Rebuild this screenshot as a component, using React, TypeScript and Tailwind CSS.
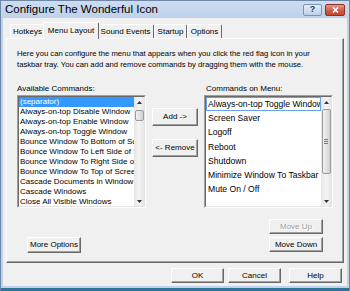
import React from 'react';

const leftItems = [
  '(separator)',
  'Always-on-top Disable Window',
  'Always-on-top Enable Window',
  'Always-on-top Toggle Window',
  'Bounce Window To Bottom of Screen',
  'Bounce Window To Left Side of Screen',
  'Bounce Window To Right Side of Screen',
  'Bounce Window To Top of Screen',
  'Cascade Documents in Window',
  'Cascade Windows',
  'Close All Visible Windows',
];

const rightItems = [
  'Always-on-top Toggle Window',
  'Screen Saver',
  'Logoff',
  'Reboot',
  'Shutdown',
  'Minimize Window To Taskbar',
  'Mute On / Off',
];

const Btn: React.FC<{ label: string; className?: string; disabled?: boolean }> = ({ label, className = '', disabled }) => (
  <div
    className={`flex items-center justify-center bg-[#f0f0f0] border border-t-white border-l-white border-r-[#696969] border-b-[#696969] shadow-[inset_-1px_-1px_0_#a0a0a0] text-[8px] leading-none ${
      disabled ? 'text-[#a0a0a0] [text-shadow:1px_1px_0_#fff]' : 'text-black'
    } ${className}`}
  >
    {label}
  </div>
);

const ScrollBar: React.FC<{ thumbTop: number; thumbH: number; grip?: boolean }> = ({ thumbTop, thumbH, grip }) => (
  <div className="w-[10px] h-full flex flex-col bg-gradient-to-r from-[#e6e6e6] via-[#f4f4f4] to-[#e6e6e6] shrink-0">
    <div className="h-[10px] flex items-center justify-center shrink-0">
      <svg width="5" height="3" viewBox="0 0 5 3"><path d="M0 3 L2.5 0 L5 3 Z" fill="#333" /></svg>
    </div>
    <div className="flex-1 flex flex-col">
      <div style={{ height: thumbTop }} />
      <div
        style={{ height: thumbH }}
        className="mx-[0.5px] rounded-[2px] border border-[#9b9b9b] bg-gradient-to-r from-[#f2f2f2] via-[#e2e2e2] to-[#cfcfcf] flex flex-col items-center justify-center gap-[1px]"
      >
        {grip && (
          <>
            <div className="w-[4px] h-px bg-[#7a7a7a]" />
            <div className="w-[4px] h-px bg-[#7a7a7a]" />
            <div className="w-[4px] h-px bg-[#7a7a7a]" />
          </>
        )}
      </div>
    </div>
    <div className="h-[10px] flex items-center justify-center shrink-0">
      <svg width="5" height="3" viewBox="0 0 5 3"><path d="M0 0 L2.5 3 L5 0 Z" fill="#333" /></svg>
    </div>
  </div>
);

const Sunken: React.FC<{ children: React.ReactNode; className?: string }> = ({ children, className = '' }) => (
  <div className={`border border-t-[#a0a0a0] border-l-[#a0a0a0] border-r-white border-b-white ${className}`}>
    <div className="w-full h-full border border-t-[#696969] border-l-[#696969] border-r-[#e3e3e3] border-b-[#e3e3e3] bg-white flex overflow-hidden">
      {children}
    </div>
  </div>
);

const Tab: React.FC<{ label: string; w: string; active?: boolean }> = ({ label, w, active }) => (
  <div
    className={`${w} flex items-center justify-center text-[8px] text-black bg-[#f0f0f0] border border-b-0 border-t-white border-l-white border-r-[#696969] rounded-t-[2px] ${
      active ? 'h-[17px] -mb-px relative z-10 -mx-[2px]' : 'h-[14px]'
    }`}
  >
    <span className={active ? '-mt-[1px]' : ''}>{label}</span>
  </div>
);

export default function App() {
  return (
    <div className="w-[350px] h-[291px] flex flex-col bg-[#bfd2ea] border border-b-0 border-[#6f86a6] font-['Liberation_Sans',Arial,sans-serif] overflow-hidden select-none">
      {/* title bar */}
      <div className="h-[17px] shrink-0 flex items-center justify-between pl-[4px] pr-[4px] bg-gradient-to-b from-[#cddcf0] to-[#bfd2ea]">
        <span className="text-[11.5px] text-black leading-none">Configure The Wonderful Icon</span>
        <div className="flex items-center gap-[3px]">
          <div className="w-[19px] h-[12px] rounded-[2px] border border-[#7d93b3] bg-gradient-to-b from-[#e3edf9] to-[#bdd0e9] flex items-center justify-center text-[9px] leading-none text-[#2c3e5a] font-bold">
            ?
          </div>
          <div className="w-[20px] h-[12px] rounded-[2px] border border-[#8a3225] bg-gradient-to-b from-[#e49a8a] via-[#d0604c] to-[#c2442e] flex items-center justify-center">
            <svg width="7" height="6" viewBox="0 0 7 6">
              <path d="M1 0.5 L6 5.5 M6 0.5 L1 5.5" stroke="#fff" strokeWidth="1.6" />
            </svg>
          </div>
        </div>
      </div>

      {/* client area */}
      <div className="mx-[2px] flex-1 bg-[#f0f0f0] flex flex-col pt-[3px] px-[3px]">
        <div className="flex items-end pl-[4px] h-[17px]">
          <Tab label="Hotkeys" w="w-[35px]" />
          <Tab label="Menu Layout" w="w-[56px]" active />
          <Tab label="Sound Events" w="w-[57px]" />
          <Tab label="Startup" w="w-[33px]" />
          <Tab label="Options" w="w-[35px]" />
        </div>

        <div className="w-[338px] h-[225px] border border-t-white border-l-white border-r-[#696969] border-b-[#696969] shadow-[inset_-1px_-1px_0_#a0a0a0] flex flex-col">
          <div className="pl-[10px] pt-[9px] text-[7.7px] leading-[11px] text-black whitespace-nowrap">
            Here you can configure the menu that appears when you click the red flag icon in your
            <br />
            taskbar tray. You can add and remove commands by dragging them with the mouse.
          </div>

          <div className="flex pl-[10px] mt-[13px]">
            {/* left column */}
            <div className="flex flex-col w-[129px]">
              <div className="text-[8px] leading-[11px] h-[11px] text-black">Available Commands:</div>
              <Sunken className="mt-[1px] h-[113px]">
                <div className="flex-1 flex flex-col overflow-hidden">
                  {leftItems.map((t, i) => (
                    <div
                      key={t}
                      className={`shrink-0 h-[10px] leading-[10px] text-[8px] whitespace-nowrap overflow-hidden pl-[1px] ${
                        i === 0 ? 'bg-[#3399ff] text-white' : 'text-black'
                      }`}
                    >
                      {t}
                    </div>
                  ))}
                </div>
                <ScrollBar thumbTop={3} thumbH={11} />
              </Sunken>
              <Btn label="More Options" className="mt-[29px] ml-[10px] w-[54px] h-[16px]" />
            </div>

            {/* middle column */}
            <div className="flex flex-col w-[46px] mx-[6px] pt-[25px]">
              <Btn label="Add ->" className="h-[18px]" />
              <Btn label="<- Remove" className="h-[18px] mt-[13px]" />
            </div>

            {/* right column */}
            <div className="flex flex-col w-[129px]">
              <div className="text-[8px] leading-[11px] h-[11px] text-black pl-[2px]">Commands on Menu:</div>
              <Sunken className="mt-[1px] h-[113px]">
                <div className="flex-1 flex flex-col overflow-hidden">
                  {rightItems.map((t, i) => (
                    <div
                      key={t}
                      className={`shrink-0 h-[14.2px] leading-[12.2px] text-[8.6px] text-black whitespace-nowrap overflow-hidden pl-[1px] border ${
                        i === 0 ? 'border-[#66a3e0]' : 'border-transparent'
                      }`}
                    >
                      {t}
                    </div>
                  ))}
                </div>
                <ScrollBar thumbTop={2} thumbH={65} grip />
              </Sunken>
              <div className="flex flex-col items-end pr-[10px]">
                <Btn label="Move Up" className="mt-[11px] w-[54px] h-[15px]" disabled />
                <Btn label="Move Down" className="mt-[3px] w-[54px] h-[15px]" />
              </div>
            </div>
          </div>
        </div>

        <div className="flex justify-end mt-[5px] pr-[2px]">
          <Btn label="OK" className="w-[53px] h-[15px]" />
          <Btn label="Cancel" className="w-[53px] h-[15px] ml-[4px]" />
          <Btn label="Help" className="w-[53px] h-[15px] ml-[8px]" />
        </div>
      </div>
      <div className="h-[2px] shrink-0" />
      <div className="h-[3px] shrink-0 bg-[#2f7398]" />
    </div>
  );
}
